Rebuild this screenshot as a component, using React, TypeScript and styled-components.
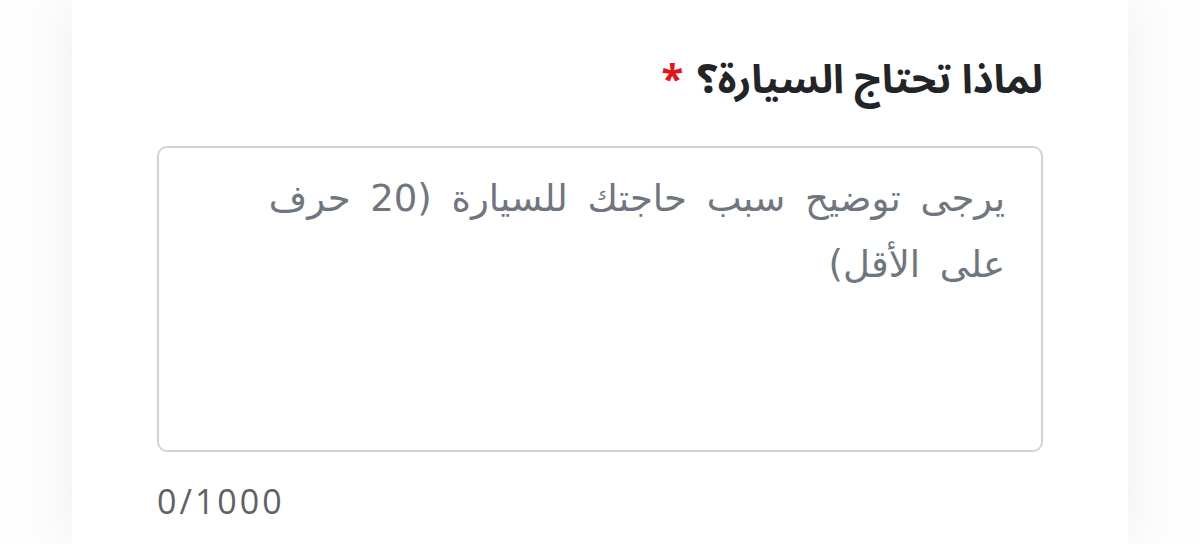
import React from 'react';
import styled, { createGlobalStyle } from 'styled-components';

const Global = createGlobalStyle`
  html, body {
    margin: 0;
    padding: 0;
    background: #fdfdfd;
    height: 544px;
    overflow: hidden;
  }
`;

const Page = styled.div`
  height: 544px;
  padding: 0 72px;
  box-sizing: border-box;
`;

const Card = styled.div`
  height: 100%;
  background: #ffffff;
  box-shadow: 0 0 48px rgba(0, 0, 0, 0.06);
  padding: 50px 85px 0;
  box-sizing: border-box;
  display: flex;
  flex-direction: column;
  font-family: "Noto Sans Arabic", "DejaVu Sans", "Noto Sans", sans-serif;
`;

const Label = styled.label`
  direction: rtl;
  font-size: 40px;
  font-weight: 700;
  color: #222428;
  line-height: 62px;
  margin-bottom: 34px;
`;

const Star = styled.span`
  color: #e8121a;
  margin-right: 14px;
`;

const Area = styled.textarea`
  direction: rtl;
  height: 306px;
  box-sizing: border-box;
  border: 2px solid #d2d3d6;
  border-radius: 10px;
  padding: 18px 36px 18px 80px;
  font-family: "DejaVu Sans", sans-serif;
  font-size: 37px;
  line-height: 66px;
  word-spacing: 8px;
  resize: none;
  outline: none;
  color: #222;

  &::placeholder {
    color: #6f7680;
  }
`;

const Counter = styled.div`
  margin-top: 26px;
  font-family: "Open Sans", "Noto Sans", sans-serif;
  font-size: 34px;
  color: #5f6165;
  letter-spacing: 3px;
`;

export default function App() {
  return (
    <>
      <Global />
      <Page>
        <Card>
          <Label>
            لماذا تحتاج السيارة؟<Star>*</Star>
          </Label>
          <Area placeholder="يرجى توضيح سبب حاجتك للسيارة (20 حرف على الأقل)" />
          <Counter>0/1000</Counter>
        </Card>
      </Page>
    </>
  );
}
